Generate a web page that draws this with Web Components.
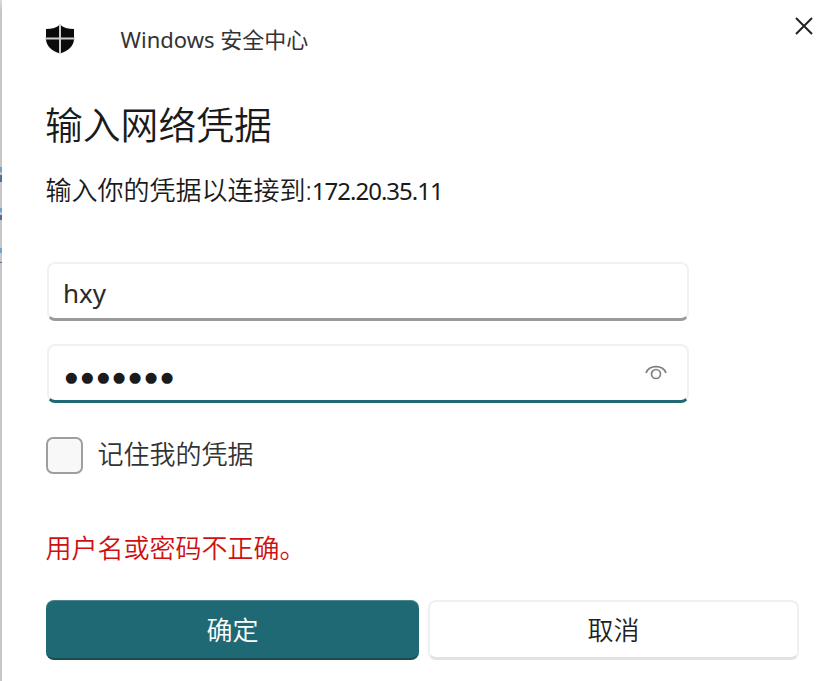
<!DOCTYPE html>
<html lang="zh">
<head>
<meta charset="utf-8">
<title>Windows 安全中心</title>
<style>
  html, body { margin: 0; height: 100%; background: #fff; }
  body { font-family: "Noto Sans", "Noto Sans CJK SC", sans-serif; font-weight: 350; color: #1b1b1b; overflow: hidden; }
</style>
</head>
<body>
<credential-dialog>
  <dialog-header slot="header">Windows 安全中心</dialog-header>
  <span slot="title">输入网络凭据</span>
  <span slot="subtitle">输入你的凭据以连接到:<span style="font-size:24px;font-weight:400;letter-spacing:-1px">172.20.35.11</span></span>
  <text-field slot="user" value="hxy"></text-field>
  <text-field slot="password" value="●●●●●●●" type="password" focused></text-field>
  <check-box slot="remember">记住我的凭据</check-box>
  <span slot="error">用户名或密码不正确。</span>
  <action-button slot="ok" primary>确定</action-button>
  <action-button slot="cancel">取消</action-button>
</credential-dialog>

<script>
class CredentialDialog extends HTMLElement {
  constructor() {
    super();
    this.attachShadow({ mode: 'open' });
    this.shadowRoot.innerHTML = `
      <style>
        :host {
          display: flex;
          flex-direction: column;
          box-sizing: border-box;
          width: 830px;
          height: 681px;
          padding: 0 31px 0 43.500px;
          background: #fff;
          border-left: 2px solid #c6c6c6;
          border-image: linear-gradient(to bottom,
            #dcdcdc 0, #c6c6c6 12px,
            #c6c6c6 168px, #6aa5d8 168px, #6aa5d8 172px,
            #c6c6c6 172px, #c6c6c6 175px, #5a6a9a 175px, #5a6a9a 182px,
            #c6c6c6 182px, #c6c6c6 208px, #6aa5d8 208px, #6aa5d8 212px,
            #c6c6c6 212px, #c6c6c6 215px, #5a6a9a 215px, #5a6a9a 220px,
            #c6c6c6 220px, #c6c6c6 248px, #6aa5d8 248px, #6aa5d8 253px,
            #c6c6c6 253px, #c6c6c6 262px, #5a6a9a 262px, #5a6a9a 263px,
            #c6c6c6 263px) 1;
        }
        .title {
          margin-top: 31px;
          margin-left: -.500px;
          font-size: 37.800px;
          line-height: 54px;
          color: #1a1a1a;
        }
        .subtitle {
          margin-top: 18px;
          font-size: 26px;
          line-height: 40px;
          color: #1a1a1a;
        }
        .fields {
          display: flex;
          flex-direction: column;
          gap: 23px;
          margin-top: 51px;
          margin-left: 1.500px;
          width: 642px;
        }
        .remember { margin-top: 33px; margin-left: .500px; }
        .error {
          margin-top: 54px;
          font-size: 26px;
          line-height: 40px;
          color: #cf1010;
        }
        .actions {
          display: grid;
          grid-template-columns: 373px 371px;
          gap: 9px;
          margin-top: 32px;
          margin-left: .500px;
        }
      </style>
      <slot name="header"></slot>
      <div class="title"><slot name="title"></slot></div>
      <div class="subtitle"><slot name="subtitle"></slot></div>
      <div class="fields">
        <slot name="user"></slot>
        <slot name="password"></slot>
      </div>
      <div class="remember"><slot name="remember"></slot></div>
      <div class="error"><slot name="error"></slot></div>
      <div class="actions">
        <slot name="ok"></slot>
        <slot name="cancel"></slot>
      </div>
    `;
  }
}

class DialogHeader extends HTMLElement {
  constructor() {
    super();
    this.attachShadow({ mode: 'open' });
    this.shadowRoot.innerHTML = `
      <style>
        :host {
          display: flex;
          align-items: center;
          height: 54px;
          margin-top: 13px;
          position: relative;
          font-size: 22px;
          font-weight: 400;
          color: #333;
        }
        .shield { width: 30px; height: 30px; margin: -2px 46px 0 -1px; flex: none; }
        .label { position: relative; top: -2px; white-space: nowrap; }
        .close {
          position: absolute;
          top: 2px;
          right: -16px;
          width: 22px;
          height: 22px;
        }
      </style>
      <svg class="shield" viewBox="0 0 30 30">
        <path fill="#0b0b0b" d="M15 .5C12 3.500 7 5 1 5v10c0 7 6 12 14 14.500 8-2.500 14-7.500 14-14.500V5C23 5 18 3.500 15 .5z"/>
        <path fill="none" stroke="#cfcfcf" stroke-width="2" d="M15 0v30M0 14.500h30"/>
      </svg>
      <span class="label"><slot></slot></span>
      <svg class="close" viewBox="0 0 22 22">
        <path fill="none" stroke="#222" stroke-width="2" d="M3 3l16 16M19 3L3 19"/>
      </svg>
    `;
  }
}

class TextField extends HTMLElement {
  constructor() {
    super();
    this.attachShadow({ mode: 'open' });
  }

  connectedCallback() {
    const isPassword = this.getAttribute('type') === 'password';
    const eye = isPassword ? `
      <svg class="eye" viewBox="0 0 24 18">
        <path fill="none" stroke="#808080" stroke-width="1.700" d="M2 10C5 1.500 19 1.500 22 10"/>
        <circle cx="12" cy="11" r="4.500" fill="none" stroke="#808080" stroke-width="1.700"/>
      </svg>` : '';
    this.shadowRoot.innerHTML = `
      <style>
        :host {
          display: flex;
          align-items: center;
          justify-content: space-between;
          box-sizing: border-box;
          height: 59px;
          padding: 0 19px 0 14px;
          background: #fff;
          border: 2px solid #f1f1f1;
          border-bottom: 3px solid #9a9a9a;
          border-radius: 8px;
          font-size: 26px;
          font-weight: 400;
          color: #2a2a2a;
        }
        :host([focused]) { border-bottom-color: #1f6975; }
        .value { padding-top: 4px; }
        .value.password {
          font-family: "DejaVu Sans", sans-serif;
          font-size: 14.500px;
          letter-spacing: 3.300px;
          color: #1b1b1b;
          padding-top: 7px;
          margin-left: 2px;
        }
        .eye { width: 24px; height: 18px; margin-top: -3px; }
      </style>
      <span class="value ${isPassword ? 'password' : ''}">${this.getAttribute('value') || ''}</span>
      ${eye}
    `;
  }
}

class CheckBox extends HTMLElement {
  constructor() {
    super();
    this.attachShadow({ mode: 'open' });
    this.shadowRoot.innerHTML = `
      <style>
        :host {
          display: flex;
          align-items: center;
          gap: 14.500px;
          font-size: 26px;
          color: #333;
        }
        .box {
          box-sizing: border-box;
          width: 37px;
          height: 37px;
          background: #f8f8f8;
          border: 2px solid #9e9e9e;
          border-radius: 7px;
        }
        .label { position: relative; top: -2px; }
      </style>
      <span class="box"></span>
      <span class="label"><slot></slot></span>
    `;
  }
}

class ActionButton extends HTMLElement {
  constructor() {
    super();
    this.attachShadow({ mode: 'open' });
    this.shadowRoot.innerHTML = `
      <style>
        :host {
          display: flex;
          align-items: center;
          justify-content: center;
          box-sizing: border-box;
          height: 60px;
          padding-bottom: 1px;
          background: #fff;
          border: 2px solid #f0f0f0;
          border-bottom: 3px solid #e2e2e2;
          border-radius: 8px;
          font-size: 26px;
          color: #1f1f1f;
        }
        :host([primary]) {
          background: #1f6975;
          border: 0;
          border-top: 1px solid #4c8791;
          border-bottom: 2px solid #174c55;
          color: #fff;
        }
      </style>
      <slot></slot>
    `;
  }
}

customElements.define('credential-dialog', CredentialDialog);
customElements.define('dialog-header', DialogHeader);
customElements.define('text-field', TextField);
customElements.define('check-box', CheckBox);
customElements.define('action-button', ActionButton);
</script>
</body>
</html>
